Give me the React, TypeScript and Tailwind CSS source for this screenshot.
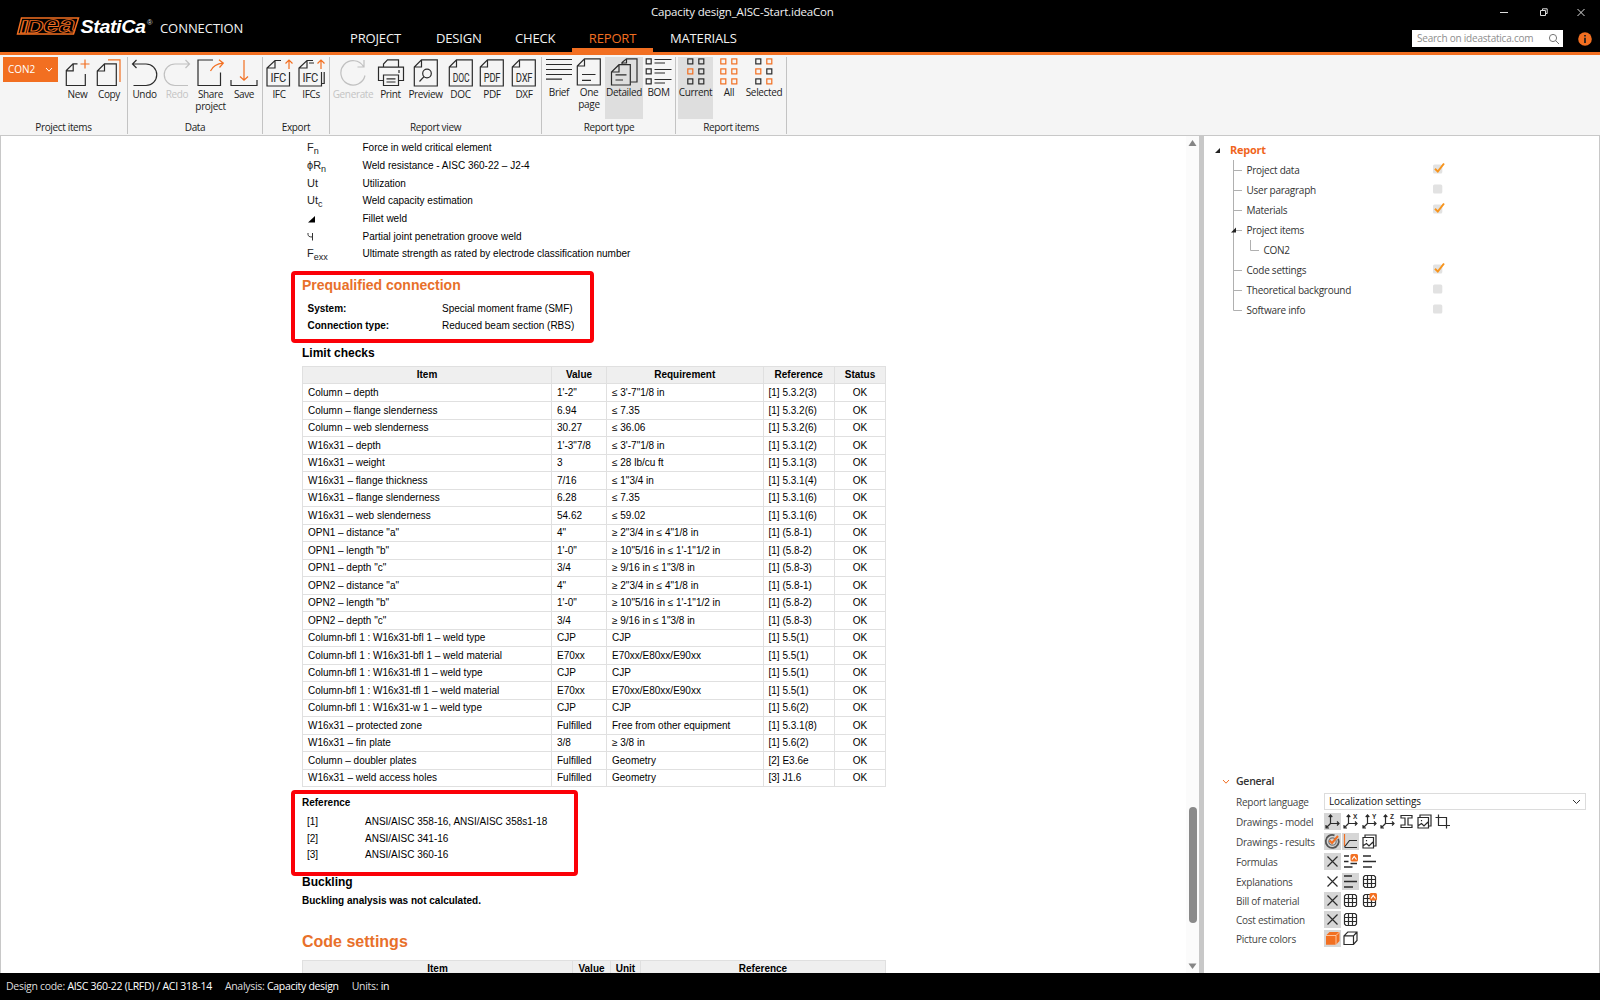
import React from 'react';
import clsx from 'clsx';

const ORANGE = '#f26f21';
const INK = '#2b2b2b';

interface IconProps {
  children: React.ReactNode;
  w?: number;
  h?: number;
  color?: string;
}

// Ribbon icons are drawn on a 28x28 grid
const Svg: React.FC<IconProps> = ({ children, w = 28, h = 28, color = INK }) => (
  <svg width={w} height={h} viewBox={`0 0 ${w} ${h}`} fill="none" stroke={color} strokeWidth={1.2} className="block shrink-0">
    {children}
  </svg>
);

const Page = () => <path d="M9.5 .8H25.3V27H2.3V8ZM9.5 .8V8H2.3" />;

const FileIcon = ({ text }: { text: string }) => (
  <Svg>
    <Page />
    <text x="5.8" y="22.5" fontFamily="Roboto" fontSize="13.5" textLength="16.5" lengthAdjust="spacingAndGlyphs" fill={INK} stroke="none">
      {text}
    </text>
  </Svg>
);

const IfcIcon = ({ many }: { many?: boolean }) => (
  <Svg>
    <path d="M16 1.5H10L2 9V27H24.5V13M10 1.5V9H2" />
    {many && <path d="M17 4H12M27.2 13V24.5H24" />}
    <text x="5.5" y="22.5" fontFamily="Roboto" fontSize="12.5" textLength="15.5" lengthAdjust="spacingAndGlyphs" fill={INK} stroke="none">
      IFC
    </text>
    <path stroke={ORANGE} d="M24 10V1M20.5 4.5L24 1L27.5 4.5" />
  </Svg>
);

const DotsIcon = ({ marks }: { marks: string }) => (
  <Svg w={20}>
    {marks.split('').map((m, i) => (
      <rect key={i} x={i % 2 === 0 ? 1.8 : 12.8} y={0.9 + Math.floor(i / 2) * 10} width="5" height="5" stroke={m === 'o' ? ORANGE : INK} />
    ))}
  </Svg>
);

interface ToolProps {
  label: string;
  icon: React.ReactNode;
  className: string;
  active?: boolean;
  disabled?: boolean;
}

const Tool: React.FC<ToolProps> = ({ label, icon, className, active, disabled }) => (
  <div className={clsx('flex h-[62px] shrink-0 flex-col items-center', className, active && 'bg-[#dedede]', disabled && 'text-[#c4c4c4]')}>
    {icon}
    <span className="mt-px block text-center text-[10px] leading-[12.3px] whitespace-pre">{label}</span>
  </div>
);

const Group: React.FC<{ label: string; className: string; children: React.ReactNode }> = ({ label, className, children }) => (
  <div className={clsx('flex h-[77px] shrink-0 flex-col border-r border-[#c3c3c3]', className)}>
    <div className="flex h-[63px] items-start">{children}</div>
    <div className="pt-px text-center text-[10px] leading-[15px]">{label}</div>
  </div>
);

const Logo = () => (
  <svg width="142" height="24" viewBox="0 0 142 24" className="block">
    <path d="M5.5 3H62.5L57.5 19H1.5Z" fill="#000" stroke={ORANGE} strokeWidth="1.5" />
    <g transform="skewX(-14)" fontFamily="Liberation Sans" fontWeight="bold" fill="#000" stroke={ORANGE} strokeWidth=".9">
      <text x="6.8" y="17.6" fontSize="18" textLength="7.5" lengthAdjust="spacingAndGlyphs">I</text>
      <text x="14" y="17.6" fontSize="18" textLength="16" lengthAdjust="spacingAndGlyphs">D</text>
      <text x="30" y="17.4" fontSize="23" textLength="15.5" lengthAdjust="spacingAndGlyphs">e</text>
      <text x="46" y="17.4" fontSize="23" textLength="15.5" lengthAdjust="spacingAndGlyphs">a</text>
    </g>
    <text x="64.5" y="18.4" fontFamily="Liberation Sans" fontWeight="bold" fontStyle="italic" fontSize="19" textLength="65" lengthAdjust="spacingAndGlyphs" fill="#fff">
      StatiCa
    </text>
    <text x="131" y="9.5" fontFamily="Liberation Sans" fontSize="7.5" fill="#ddd">®</text>
  </svg>
);

const Header = () => (
  <header className="flex h-[52px] bg-black text-[#f2f2f2]">
    <div className="flex w-[350px] items-start pt-[15px] pl-[16px]">
      <Logo />
      <span className="ml-[2px] text-[13px] leading-[27px] tracking-[-0.005em]">CONNECTION</span>
    </div>
    <div className="flex flex-1 flex-col">
      <div className="h-[24px] pl-[301px] text-[11.5px] leading-[24px] tracking-[-0.016em]">Capacity design_AISC-Start.ideaCon</div>
      <nav className="flex h-[28px] text-[13px] leading-[28px] tracking-[-0.012em]">
        <span className="w-[86px]">PROJECT</span>
        <span className="w-[79px]">DESIGN</span>
        <span className="w-[57px]">CHECK</span>
        <span className="w-[81px] text-center text-[#f26f21] shadow-[inset_0_-4px_0_#f26f21]">REPORT</span>
        <span className="pl-[17px]">MATERIALS</span>
      </nav>
    </div>
    <div className="flex w-[188px] flex-col">
      <svg width="188" height="30" viewBox="0 0 188 30" fill="none" stroke="#ddd" className="block">
        <path d="M88 12.5H96M128.5 10.5H133.5V15.5H128.5ZM130.5 10V8.8H135.2V13.5H134M165.5 9L172.5 16M172.5 9L165.5 16" />
      </svg>
      <div className="flex items-center">
        <div className="flex h-[17px] w-[151px] items-center justify-between bg-white pr-[3px] pl-[5px] text-[10px] leading-[17px] tracking-[-0.022em] text-[#8e8e8e]">
          <span>Search on ideastatica.com</span>
          <svg width="12" height="12" viewBox="0 0 12 12" fill="none" stroke="#777">
            <circle cx="5" cy="5" r="3.6" />
            <path d="M7.6 7.6L11 11" />
          </svg>
        </div>
        <svg width="14" height="14" viewBox="0 0 14 14" className="ml-[15px]">
          <circle cx="7" cy="7" r="6.8" fill={ORANGE} />
          <path d="M7 3V4.6M7 5.8V11" stroke="#222" strokeWidth="1.8" />
        </svg>
      </div>
    </div>
  </header>
);

const Ribbon = () => (
  <div className="flex h-[81px] items-start border-b border-[#c8c8c8] bg-[#f5f5f5] pt-[2px] tracking-[-0.022em] text-[#1c1c1c]">
    <Group label="Project items" className="w-[128px]">
      <div className="ml-[3px] flex h-[25px] w-[55px] items-center justify-between bg-[#f26f21] px-[5px] text-[10px] tracking-[0em] text-white">
        CON2
        <svg width="8" height="6" viewBox="0 0 8 6" fill="none" stroke="#fff">
          <path d="M1 1L4 4.2L7 1" />
        </svg>
      </div>
      <Tool className="ml-[4px] w-[31px] pt-[2px]" label="New" icon={<Svg><path d="M13.5 4.8H9L2.3 11.5V26.5H21.3V15M9.2 4.8V11.8H2.3" /><path stroke={ORANGE} d="M16.5 5H25.5M21 .5V9.5" /></Svg>} />
      <Tool className="w-[32px] pt-[2px]" label="Copy" icon={<Svg><path d="M9.5 4.8H21.3V26.5H2.3V12ZM9.5 4.8V12H2.3" /><path stroke={ORANGE} d="M13 .9H25V23" /></Svg>} />
    </Group>
    <Group label="Data" className="w-[135px]">
      <Tool className="w-[33px] pt-[2px]" label="Undo" icon={<Svg><path d="M5.5 1L1.5 5L5.5 9M1.5 5H15A10.7 10.7 0 0 1 15 26.5H2.5" /></Svg>} />
      <Tool className="w-[32px] pt-[2px]" disabled label="Redo" icon={<Svg color="#c0c0c0"><path d="M22.5 1L26.5 5L22.5 9M26.5 5H12A10.7 10.7 0 0 0 12 26.5H25" /></Svg>} />
      <Tool className="w-[35px] pt-[2px]" label={'Share\nproject'} icon={<Svg><path d="M16 1H1V26.5H23.5V13.5" /><path stroke={ORANGE} d="M13.5 12Q17 5 26 4.2M22 .8L26.3 4.2L22.5 8.5" /></Svg>} />
      <Tool className="w-[32px] pt-[2px]" label="Save" icon={<Svg><path d="M1 21V26.5H27V21" /><path stroke={ORANGE} d="M14 1V21M10 17.5L14 21.2L18 17.5" /></Svg>} />
    </Group>
    <Group label="Export" className="w-[67px]">
      <Tool className="w-[32px] pt-[2px]" label="IFC" icon={<IfcIcon />} />
      <Tool className="w-[32px] pt-[2px]" label="IFCs" icon={<IfcIcon many />} />
    </Group>
    <Group label="Report view" className="w-[212px]">
      <Tool className="ml-[1px] w-[44px] pt-[2px]" disabled label="Generate" icon={<Svg color="#c0c0c0"><path d="M25 1V8H18.5M24.5 7.5A12.2 12.2 0 1 0 26 16.5" /></Svg>} />
      <Tool
        className="w-[31px] pt-[2px]"
        label="Print"
        icon={
          <Svg>
            <path d="M6.5 8V5L10.5 .8H21.5V8M6.5 21.5H1.5V8.2H26.5V21.5H21.5M6.5 16H21.5V26.5H6.5ZM9.5 19.8H18.5M9.5 23H18.5M22 11V14" />
          </Svg>
        }
      />
      <Tool className="w-[39px] pt-[2px]" label="Preview" icon={<Svg><Page /><circle cx="15" cy="14.5" r="4.3" /><path d="M12 17.7L7.5 22.5" /></Svg>} />
      <Tool className="w-[31px] pt-[2px]" label="DOC" icon={<FileIcon text="DOC" />} />
      <Tool className="w-[32px] pt-[2px]" label="PDF" icon={<FileIcon text="PDF" />} />
      <Tool className="w-[32px] pt-[2px]" label="DXF" icon={<FileIcon text="DXF" />} />
    </Group>
    <Group label="Report type" className="ml-px w-[133px] [&_span]:mt-0">
      <Tool className="w-[32px] pt-px" label="Brief" icon={<Svg><path d="M1 1.5H27M1 6.5H27M1 11.5H27M1 16.5H27M1 21.2H17" /></Svg>} />
      <Tool className="w-[28px] pt-px" label={'One\npage'} icon={<Svg><Page /><path d="M7 16.5H20.5M7 22.3H16" /></Svg>} />
      <Tool className="ml-[2px] w-[38px] pt-px" active label="Detailed" icon={<Svg><path d="M9 6.7H20.3V27H1.5V14ZM9 6.7V14H1.5M5.5 16.8H16.5M5.5 22H13" /><path d="M12 6V4.5L16.5 .8H27V24H21M16.5 .8V5H12.5" /></Svg>} />
      <Tool className="w-[31px] pt-px" label="BOM" icon={<Svg><path d="M1.2 .9H6.2V5.9H1.2ZM1.2 10.9H6.2V15.9H1.2ZM1.2 20.9H6.2V25.9H1.2ZM9.5 1.5H26.5M9.5 5H20M9.5 11.5H26.5M9.5 15H20M9.5 21.5H26.5M9.5 25H20" /></Svg>} />
    </Group>
    <Group label="Report items" className="w-[111px] [&_span]:mt-0">
      <Tool className="ml-[2px] w-[35px] pt-px" active label="Current" icon={<DotsIcon marks="kkokkk" />} />
      <Tool className="w-[32px] pt-px" label="All" icon={<DotsIcon marks="oooooo" />} />
      <Tool className="w-[38px] pt-px" label="Selected" icon={<DotsIcon marks="kookko" />} />
    </Group>
  </div>
);

const LEGEND: [React.ReactNode, string][] = [
  [<>F<sub>n</sub></>, 'Force in weld critical element'],
  [<>ϕR<sub>n</sub></>, 'Weld resistance - AISC 360-22 – J2-4'],
  ['Ut', 'Utilization'],
  [<>Ut<sub>c</sub></>, 'Weld capacity estimation'],
  [<svg width="9" height="8" className="block"><path d="M1 7.5H8V1Z" /></svg>, 'Fillet weld'],
  [<svg width="9" height="9" fill="none" stroke="#333" className="block"><path d="M1 1V2.5Q1 5 5.5 5M5.5 1V8.5" /></svg>, 'Partial joint penetration groove weld'],
  [<>F<sub>exx</sub></>, 'Ultimate strength as rated by electrode classification number'],
];

const CHECKS = [
  ['Column – depth', `1'-2"`, `≤ 3'-7"1/8 in`, '[1] 5.3.2(3)'],
  ['Column – flange slenderness', '6.94', '≤ 7.35', '[1] 5.3.2(6)'],
  ['Column – web slenderness', '30.27', '≤ 36.06', '[1] 5.3.2(6)'],
  ['W16x31 – depth', `1'-3"7/8`, `≤ 3'-7"1/8 in`, '[1] 5.3.1(2)'],
  ['W16x31 – weight', '3', '≤ 28 lb/cu ft', '[1] 5.3.1(3)'],
  ['W16x31 – flange thickness', '7/16', '≤ 1"3/4 in', '[1] 5.3.1(4)'],
  ['W16x31 – flange slenderness', '6.28', '≤ 7.35', '[1] 5.3.1(6)'],
  ['W16x31 – web slenderness', '54.62', '≤ 59.02', '[1] 5.3.1(6)'],
  ['OPN1 – distance "a"', '4"', '≥ 2"3/4 in ≤ 4"1/8 in', '[1] (5.8-1)'],
  ['OPN1 – length "b"', `1'-0"`, `≥ 10"5/16 in ≤ 1'-1"1/2 in`, '[1] (5.8-2)'],
  ['OPN1 – depth "c"', '3/4', '≥ 9/16 in ≤ 1"3/8 in', '[1] (5.8-3)'],
  ['OPN2 – distance "a"', '4"', '≥ 2"3/4 in ≤ 4"1/8 in', '[1] (5.8-1)'],
  ['OPN2 – length "b"', `1'-0"`, `≥ 10"5/16 in ≤ 1'-1"1/2 in`, '[1] (5.8-2)'],
  ['OPN2 – depth "c"', '3/4', '≥ 9/16 in ≤ 1"3/8 in', '[1] (5.8-3)'],
  ['Column-bfl 1 : W16x31-bfl 1 – weld type', 'CJP', 'CJP', '[1] 5.5(1)'],
  ['Column-bfl 1 : W16x31-bfl 1 – weld material', 'E70xx', 'E70xx/E80xx/E90xx', '[1] 5.5(1)'],
  ['Column-bfl 1 : W16x31-tfl 1 – weld type', 'CJP', 'CJP', '[1] 5.5(1)'],
  ['Column-bfl 1 : W16x31-tfl 1 – weld material', 'E70xx', 'E70xx/E80xx/E90xx', '[1] 5.5(1)'],
  ['Column-bfl 1 : W16x31-w 1 – weld type', 'CJP', 'CJP', '[1] 5.6(2)'],
  ['W16x31 – protected zone', 'Fulfilled', 'Free from other equipment', '[1] 5.3.1(8)'],
  ['W16x31 – fin plate', '3/8', '≥ 3/8 in', '[1] 5.6(2)'],
  ['Column – doubler plates', 'Fulfilled', 'Geometry', '[2] E3.6e'],
  ['W16x31 – weld access holes', 'Fulfilled', 'Geometry', '[3] J1.6'],
];

const CHECK_GRID = 'grid h-[17.5px] grid-cols-[249px_55px_156.5px_71.5px_51px]';

const Report = () => (
  <div className="relative flex-1 overflow-hidden border-l border-[#c8c8c8] bg-white pl-[301px] font-['Liberation_Sans',Arial,sans-serif] text-[10px] tracking-normal text-black">
    <div className="flex h-[130px] flex-col pt-[3px] pl-[5px]">
      {LEGEND.map(([symbol, text], i) => (
        <div key={i} className="flex h-[17.7px] items-center leading-[17px]">
          <span className="w-[55.5px] text-[11px] text-[#222] [&_sub]:bottom-[-3px] [&_sub]:text-[9px]">{symbol}</span>
          <span>{text}</span>
        </div>
      ))}
    </div>
    <h2 className="mt-[11px] h-[24px] text-[14px] leading-[17px] font-bold text-[#e8702a]">Prequalified connection</h2>
    <dl className="grid w-[340px] grid-cols-[134.5px_1fr] pl-[5.5px] leading-[16.7px]">
      <dt className="font-bold">System:</dt>
      <dd>Special moment frame (SMF)</dd>
      <dt className="font-bold">Connection type:</dt>
      <dd>Reduced beam section (RBS)</dd>
    </dl>
    <h3 className="mt-[12px] h-[19.5px] text-[12px] leading-[15px] font-bold">Limit checks</h3>
    <div className="w-[584px] border-t border-l border-[#e0e0e0]">
      <div className={clsx(CHECK_GRID, 'text-center leading-[16.5px] font-bold [&>span]:border-r [&>span]:border-b [&>span]:border-[#e0e0e0] [&>span]:bg-[#efefef]')}>
        <span>Item</span>
        <span>Value</span>
        <span>Requirement</span>
        <span>Reference</span>
        <span>Status</span>
      </div>
      {CHECKS.map((row, i) => (
        <div key={i} className={clsx(CHECK_GRID, 'leading-[17px] [&>span]:border-r [&>span]:border-b [&>span]:border-[#e0e0e0]')}>
          {row.map((cell, j) => (
            <span key={j} className="pl-[5px]">{cell}</span>
          ))}
          <span className="text-center">OK</span>
        </div>
      ))}
    </div>
    <h4 className="mt-[9px] h-[18px] leading-[14px] font-bold">Reference</h4>
    <dl className="grid w-[340px] grid-cols-[58px_1fr] pl-[5px] leading-[16.7px]">
      <dt>[1]</dt>
      <dd>ANSI/AISC 358-16, ANSI/AISC 358s1-18</dd>
      <dt>[2]</dt>
      <dd>ANSI/AISC 341-16</dd>
      <dt>[3]</dt>
      <dd>ANSI/AISC 360-16</dd>
    </dl>
    <h3 className="mt-[10.5px] text-[12px] leading-[15px] font-bold">Buckling</h3>
    <p className="mt-[4px] leading-[14px] font-bold">Buckling analysis was not calculated.</p>
    <h1 className="mt-[24px] text-[16px] leading-[20px] font-bold text-[#e8702a]">Code settings</h1>
    <div className="mt-[8px] grid h-[18px] w-[584px] grid-cols-[270px_38px_30px_1fr] border-t border-l border-[#e0e0e0] text-center leading-[16px] font-bold [&>span]:border-r [&>span]:border-[#e0e0e0] [&>span]:bg-[#efefef]">
      <span>Item</span>
      <span>Value</span>
      <span>Unit</span>
      <span>Reference</span>
    </div>

    {/* Highlight frames over the sections */}
    <div className="absolute top-[135px] left-[290px] h-[72px] w-[303px] rounded-[4px] border-[4.5px] border-[#fb0007]" />
    <div className="absolute top-[654px] left-[290px] h-[86px] w-[287px] rounded-[4px] border-[4.5px] border-[#fb0007]" />
  </div>
);

const Scrollbar = () => (
  <div className="flex h-full w-[13px] flex-col items-center bg-[#fbfbfb]">
    <svg width="9" height="12" viewBox="0 0 9 12" fill="#858585" className="block"><path d="M4.5 4L8.5 10H.5Z" /></svg>
    <div className="mt-[659px] h-[116px] w-[8px] rounded-full bg-[#8a8a8a]" />
    <svg width="9" height="12" viewBox="0 0 9 12" fill="#858585" className="mt-auto mb-px block"><path d="M4.5 9L8.5 3.5H.5Z" /></svg>
  </div>
);

const TREE = [
  { name: 'Project data', checked: true },
  { name: 'User paragraph', checked: false },
  { name: 'Materials', checked: true },
  { name: 'Project items', checked: null },
  { name: 'CON2', checked: null, nested: true },
  { name: 'Code settings', checked: true },
  { name: 'Theoretical background', checked: false },
  { name: 'Software info', checked: false },
];

const Tree = () => (
  <div className="flex flex-col pt-[4px] text-[10px] leading-[20px] text-[#333]">
    <div className="flex h-[20px] items-center pl-[11px]">
      <svg width="5" height="5" className="mr-[10px] block"><path d="M5 0V5H0Z" fill="#222" /></svg>
      <span className="text-[11px] font-bold tracking-[-0.025em] text-[#f0651d]">Report</span>
    </div>
    {TREE.map((node, i) => (
      <div key={node.name} className="flex h-[20px] items-center pl-[27px]">
        <svg width={node.nested ? 32.5 : 15.5} height="20" fill="none" stroke="#b0b0b0" className="block shrink-0">
          <path d={i === TREE.length - 1 ? 'M2.5 0V10.5' : 'M2.5 0V20'} />
          <path d={node.nested ? 'M19.5 0V10.5H28' : 'M2.5 10.5H11'} />
          {node.name === 'Project items' && <path d="M5 7.5V12.5H0Z" fill="#222" stroke="none" />}
        </svg>
        <span className="leading-[19px]">{node.name}</span>
        {node.checked !== null && (
          <svg width="12" height="13" viewBox="0 0 12 13" className="mr-[154px] mb-[4px] ml-auto block">
            <rect x="0" y="2.5" width="9.3" height="9" rx="1.5" fill="#e2e2e2" />
            {node.checked && <path d="M2 6.8L4.8 9.6L11 1.5" stroke="#f7941d" strokeWidth="2" fill="none" />}
          </svg>
        )}
      </div>
    ))}
  </div>
);

// Small option icons, 17x17
const Axes = ({ axis }: { axis?: string }) => (
  <>
    <path d="M6.5 2V10.5H15M6.5 10.5L2 15M4.7 4L6.5 2L8.3 4M13 8.5L15 10.5L13 12.5M2 12V15H5" />
    {axis && <text x="11" y="6" fontSize="6.5" fontWeight="bold" fontFamily="Liberation Sans" fill={INK} stroke="none">{axis}</text>}
  </>
);
const Cross = () => <path d="M3.5 3.5L13.5 13.5M13.5 3.5L3.5 13.5" />;
const Lines = () => <path strokeWidth="1.4" d="M2 3H10M2 8.5H15M2 14H11" />;
const Table = () => <path d="M4 2.5H13L14.5 4V13L13 14.5H4L2.5 13V4ZM6.5 2.5V14.5M10.5 2.5V14.5M2.5 6.5H14.5M2.5 10.5H14.5" />;
const Picture = () => <path d="M2 4.5H12.5V15H2ZM4 4V2H15V13H13M2.5 12.5L5.5 10.5L8 13L12 9M5.5 7V8.2" />;
const Badge = () => (
  <>
    <rect x="8.5" y="1" width="7.5" height="7.5" rx="1.5" fill={ORANGE} stroke="none" />
    <path d="M10 6.5L12.2 3.5L14.5 6.5" stroke="#fff" />
  </>
);

const OPTIONS: { label: string; height: string; icons: [React.ReactNode, boolean][] }[] = [
  {
    label: 'Drawings - model',
    height: 'h-[20px]',
    icons: [
      [<Axes />, true],
      [<Axes axis="X" />, false],
      [<Axes axis="Y" />, false],
      [<Axes axis="Z" />, false],
      [<path d="M3 2.5H14V5H10V12H14V14.5H3V12H7V5H3Z" />, false],
      [<Picture />, false],
      [<path d="M4.5 1.5V12.5H16M1.5 4.5H12.5V15.5" />, false],
    ],
  },
  {
    label: 'Drawings - results',
    height: 'h-[20px]',
    icons: [
      [<><path d="M14.2 5.8A6.5 6.5 0 1 1 10.5 2.3" strokeWidth="1.8" stroke="#555" /><circle cx="8.5" cy="8.5" r="3.7" stroke="#777" /><path d="M5.5 7.5L8 10L14 3" stroke={ORANGE} strokeWidth="2" /></>, true],
      [<><path d="M2.5 1V13" stroke={ORANGE} /><path d="M2.5 14.5H15M2.5 14L7.5 7.5H15" /></>, true],
      [<Picture />, false],
    ],
  },
  { label: 'Formulas', height: 'h-[21px]', icons: [[<Cross />, true], [<><path strokeWidth="1.4" d="M2 3H7M2 8.5H6.5M2 14H10.5M8.5 10.5H15" /><Badge /></>, false], [<Lines />, false]] },
  { label: 'Explanations', height: 'h-[19px]', icons: [[<Cross />, false], [<Lines />, true], [<Table />, false]] },
  { label: 'Bill of material', height: 'h-[19px]', icons: [[<Cross />, true], [<Table />, false], [<><Table /><Badge /></>, false]] },
  { label: 'Cost estimation', height: 'h-[19px]', icons: [[<Cross />, true], [<Table />, false]] },
  {
    label: 'Picture colors',
    height: 'h-[19.5px]',
    icons: [
      [<><path d="M2 5.5L5.5 2H15.5V11L12 14.8H2Z" fill={ORANGE} stroke="none" /><path d="M2 5.5H12L15.5 2M12 5.5V15" stroke="#ffd9bd" strokeWidth=".8" /></>, true],
      [<path d="M2 5.8L5.8 2H15V10.5L11.5 14.5H2ZM2 5.8H11.5L15 2M11.5 5.8V14.5" />, false],
    ],
  },
];

const General = () => (
  <div className="flex h-[203px] flex-col text-[10px] text-[#444]">
    <div className="flex h-[22px] shrink-0 items-center pt-px pl-[18px]">
      <svg width="8" height="6" viewBox="0 0 8 6" fill="none" stroke={ORANGE} className="mr-[6px] block"><path d="M1 1L4 4.2L7 1" /></svg>
      <span className="text-[10.5px] font-semibold text-[#333]">General</span>
    </div>
    <div className="flex h-[20px] shrink-0 items-center pl-[32px]">
      <span className="w-[88px]">Report language</span>
      <div className="mb-px flex h-[17px] w-[262px] items-center justify-between border border-[#dcdcdc] pr-[4px] pl-[4px] text-[10px] tracking-[-0.01em] text-[#111]">
        Localization settings
        <svg width="9" height="6" viewBox="0 0 9 6" fill="none" stroke="#333"><path d="M1 1L4.5 4.5L8 1" /></svg>
      </div>
    </div>
    {OPTIONS.map((row) => (
      <div key={row.label} className={clsx('flex shrink-0 items-center pl-[32px]', row.height)}>
        <span className="w-[88px] whitespace-nowrap">{row.label}</span>
        <div className="mb-[2px] flex gap-[1.4px]">
          {row.icons.map(([icon, on], i) => (
            <svg key={i} width="17" height="17" viewBox="0 0 17 17" fill="none" stroke={INK} strokeWidth="1.2" className={clsx('block', on && 'bg-[#d6d6d6]')}>
              {icon}
            </svg>
          ))}
        </div>
      </div>
    ))}
  </div>
);

const App: React.FC = () => (
  <div className="flex h-[1000px] w-[1600px] flex-col overflow-hidden bg-white font-['Open_Sans','Noto_Sans',sans-serif] tracking-tight">
    <Header />
    <div className="h-[3px] bg-[#f26f21]" />
    <Ribbon />
    <div className="flex h-[837px]">
      <Report />
      <Scrollbar />
      <div className="w-[5px] bg-[#c8c8c8]" />
      <aside className="flex w-[396px] flex-col justify-between border-r border-[#c8c8c8] bg-white tracking-[-0.016em]">
        <Tree />
        <General />
      </aside>
    </div>
    <footer className="flex h-[27px] gap-[13px] bg-black pl-[6px] text-[10.5px] leading-[27px] tracking-[-0.028em] text-[#ddd]">
      <span>Design code: <span className="text-white">AISC 360-22 (LRFD) / ACI 318-14</span></span>
      <span>Analysis: <span className="text-white">Capacity design</span></span>
      <span>Units: <span className="text-white">in</span></span>
    </footer>
  </div>
);

export default App;
